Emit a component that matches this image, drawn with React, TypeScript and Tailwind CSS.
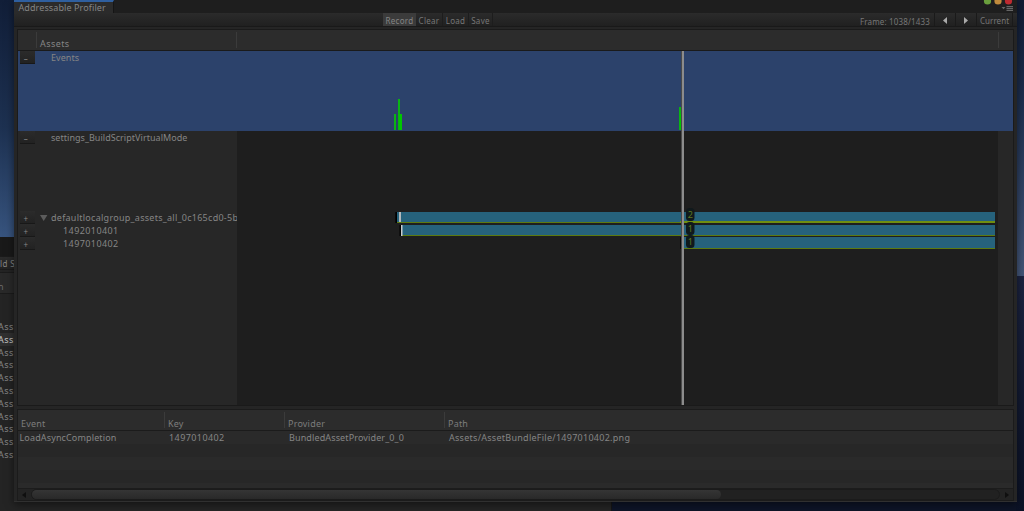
import clsx from 'clsx'

type Bar = { x: number; y: number; w: number; h: number; fill: string }

type Lane = {
  label: string
  expanded?: boolean
  selected?: boolean
  arrow?: boolean
  className: string
  height: string
  bars: Bar[]
  badge?: { text: string; y: number }
}

const BLUE = '#26627c'
const GREEN = '#0ab414'
const OLIVE = '#5c7a10'

const lanes: Lane[] = [
  {
    label: 'Events',
    expanded: true,
    selected: true,
    className: 'pl-[14px] tracking-[0.05px]',
    height: 'h-20',
    bars: [
      { x: 157, y: 63, w: 2, h: 16, fill: GREEN },
      { x: 161, y: 48, w: 2, h: 31, fill: GREEN },
      { x: 162, y: 63, w: 3, h: 16, fill: '#00c800' },
      { x: 442, y: 56, w: 2, h: 23, fill: GREEN },
      { x: 443, y: 63, w: 2, h: 16, fill: '#00c800' },
    ],
  },
  {
    label: 'settings_BuildScriptVirtualMode',
    expanded: true,
    className: 'pl-[14px] tracking-[0.04px]',
    height: 'h-20',
    bars: [],
  },
  {
    label: 'defaultlocalgroup_assets_all_0c165cd0-5b',
    arrow: true,
    className: 'pl-[3px] tracking-[0.27px]',
    height: 'h-[13px]',
    bars: [
      { x: 158.3, y: 1, w: 1.7, h: 11, fill: '#000' },
      { x: 160, y: 1, w: 598, h: 10, fill: BLUE },
      { x: 160, y: 11, w: 283, h: 1, fill: OLIVE },
      { x: 443, y: 10, w: 315, h: 2, fill: '#6f8f10' },
      { x: 162, y: 1, w: 2, h: 10, fill: '#b4babd' },
    ],
    badge: { text: '2', y: -3 },
  },
  {
    label: '1492010401',
    className: 'pl-[26px]',
    height: 'h-[13px]',
    bars: [
      { x: 162.5, y: 1, w: 1.5, h: 11, fill: '#000' },
      { x: 164, y: 1, w: 594, h: 10, fill: BLUE },
      { x: 164, y: 11, w: 594, h: 1, fill: OLIVE },
      { x: 164, y: 1, w: 1.5, h: 11, fill: '#c8cccd' },
    ],
    badge: { text: '1', y: -2 },
  },
  {
    label: '1497010402',
    className: 'pl-[26px]',
    height: 'h-[13px]',
    bars: [
      { x: 443.3, y: 0, w: 1.7, h: 12, fill: '#000' },
      { x: 446, y: 0, w: 312, h: 11, fill: BLUE },
      { x: 446, y: 11, w: 312, h: 1, fill: OLIVE },
    ],
    badge: { text: '1', y: -2 },
  },
]

const backgroundRows = ['Ass', 'Ass', 'Ass', 'Ass', 'Ass', 'Ass', 'Ass', 'Ass', 'Ass', 'Ass', 'Ass']

export default function App() {
  return (
    <div className="relative h-[511px] w-[1024px] overflow-hidden bg-[#0d1427] font-['Noto_Sans',sans-serif] text-[9px] leading-[13px] tracking-[0.42px] text-[#858585]">
      <Desktop />
      <BackgroundWindow />
      <ProfilerWindow />
    </div>
  )
}

function Desktop() {
  return (
    <div className="absolute inset-0 flex justify-between">
      <div className="w-4 bg-linear-to-b from-[#111e38] via-[#1d3151] via-25% to-[#3c5a86] to-50%" />
      <div className="flex w-2 flex-col">
        <div className="h-[276px] bg-linear-to-b from-[#111c34] via-[#1c2e4e] via-35% to-[#435678]" />
        <div className="flex-1 bg-linear-to-b from-[#1b2340] to-[#0b1226]" />
      </div>
    </div>
  )
}

function BackgroundWindow() {
  return (
    <div className="absolute top-[237px] left-0 flex h-[274px] w-[612px] flex-col border-r border-[#151515] bg-[#242424]">
      <div className="h-[19px] bg-[#191919]" />
      <div className="h-[14px] border-y border-[#1b1b1b] bg-linear-to-b from-[#2b2b2b] to-[#222] text-[8px]">ld S</div>
      <div className="mt-0.5 h-[22px] border-t border-b border-[#1b1b1b] bg-[#292929] pt-[7px]">
        <span className="-ml-0.5 text-[#6c6c6c]">h</span>
      </div>
      <div className="pt-[26px]">
        {backgroundRows.map((row, i) => (
          <div key={i} className={clsx('h-[12.8px]', i === 1 && 'bg-[#303030] text-[#c4c4c4]')}>
            <span className="-ml-0.5">{row}</span>
          </div>
        ))}
      </div>
    </div>
  )
}

function ProfilerWindow() {
  return (
    <div className="absolute top-0 left-[14px] flex h-[502px] w-[1003px] flex-col border-b border-[#303030] bg-[#252525] px-[3px] shadow-[0_2px_8px_rgba(0,0,0,0.5)]">
      <TabBar />
      <Toolbar />
      <Timeline />
      <EventTable />
    </div>
  )
}

function TabBar() {
  return (
    <div className="-mx-[3px] flex h-[13px] shrink-0 justify-between bg-[#1e1e1e]">
      <div className="w-[100px] border-t-2 border-r border-t-[#2f5f9f] border-r-[#151515] bg-[#2b2b2b] pl-[4.5px]">
        <div className="-mt-px leading-[13px] tracking-[0.1px] whitespace-nowrap">Addressable Profiler</div>
      </div>
      <svg width="42" height="13" className="shrink-0">
        <circle cx="12.5" cy="1" r="3.6" fill="#6a9f3d" />
        <circle cx="23" cy="1" r="3.6" fill="#c08a3c" />
        <circle cx="33.5" cy="1" r="3.6" fill="#bd2a30" />
        <path d="M26.5 7h4l-2 2.2zM31.5 6h6.5v1.2h-6.5zM31.5 8h6.5v1.2h-6.5zM31.5 10h6.5v1h-6.5z" fill="#666" />
      </svg>
    </div>
  )
}

function Toolbar() {
  return (
    <div className="-mx-[3px] flex h-[14px] shrink-0 border-b border-[#191919] bg-linear-to-b from-[#2b2b2b] to-[#202020] text-[8px] leading-[15px] tracking-[0.3px] text-[#777]">
      <div className="ml-[369px] flex text-center">
        <div className="w-[33px] bg-[#3b3b3b] text-[#858585]">Record</div>
        <div className="w-[27px] border-r border-[#1d1d1d]">Clear</div>
        <div className="w-[26px] border-r border-[#1d1d1d]">Load</div>
        <div className="w-6 border-r border-[#1d1d1d]">Save</div>
      </div>
      <div className="mr-1 ml-auto flex text-center">
        <div className="w-[75px] border-r border-[#1a1a1a] pr-[5px] text-right leading-[17px] tracking-[0.15px] whitespace-nowrap">
          Frame: 1038/1433
        </div>
        <div className="w-[21px] border-r border-[#1a1a1a] pt-1">
          <svg width="6" height="7" className="mx-auto"><path d="M5 0v7L1 3.5z" fill="#aaa" /></svg>
        </div>
        <div className="w-[21px] border-r border-[#1a1a1a] pt-1">
          <svg width="6" height="7" className="mx-auto"><path d="M1 0v7l4-3.5z" fill="#aaa" /></svg>
        </div>
        <div className="w-9 border-r border-[#1a1a1a] tracking-[0.05px]">Current</div>
      </div>
    </div>
  )
}

function Timeline() {
  return (
    <div className="relative mt-0.5 flex h-[377px] shrink-0 flex-col border border-[#1a1a1a]">
      <div className="flex h-[21px] shrink-0 items-end border-b border-[#1a1a1a] bg-[#2c2c2c] pb-0.5">
        <div className="h-4 w-[19px] border-r border-[#3b3b3b]" />
        <div className="h-4 w-[200px] border-r border-[#3b3b3b] pt-[5px] pl-[3px]">Assets</div>
        <div className="h-4 w-[762px] border-r border-[#3b3b3b]" />
      </div>
      <div className="flex flex-1 flex-col bg-[#272727]">
        {lanes.map(lane => (
          <LaneRow key={lane.label} lane={lane} />
        ))}
        <div className="flex flex-1">
          <div className="w-[219px]" />
          <div className="w-[761px] bg-[#1e1e1e]" />
        </div>
      </div>
      {/* current frame marker */}
      <div className="absolute top-[21px] bottom-0 left-[663px] w-[3px] border-l border-[#4a4a4a] bg-[#8c8c8c]" />
    </div>
  )
}

function LaneRow({ lane }: { lane: Lane }) {
  return (
    <div className={clsx('flex shrink-0', lane.height, lane.selected && 'bg-[#2c426b]')}>
      <div className="w-[19px] pl-0.5">
        <div className="h-[13px] w-[15px] border-b border-[#181818] bg-linear-to-b from-[#2b2b2b] to-[#222] pt-0.5 pr-[3px] text-center text-[8px] leading-[12px]">
          {lane.expanded ? '–' : '+'}
        </div>
      </div>
      <div className={clsx('flex w-[200px] overflow-hidden whitespace-nowrap', lane.className)}>
        {lane.arrow && (
          <svg width="11" height="13" className="shrink-0"><path d="M0 4h7.4L3.7 10z" fill="#5c5c5c" /></svg>
        )}
        {lane.label}
      </div>
      <svg className={clsx('h-full w-[761px] overflow-visible', !lane.selected && 'bg-[#1e1e1e]')}>
        {lane.bars.map((b, i) => (
          <rect key={i} x={b.x} y={b.y} width={b.w} height={b.h} fill={b.fill} />
        ))}
        {lane.badge && (
          <g>
            <rect x="449" y={lane.badge.y} width="8.5" height="13" rx="3.5" fill="#10191c" />
            <text x="453.3" y={lane.badge.y + 9.5} textAnchor="middle" fontSize="9" letterSpacing="0" fill="#5d7a20">
              {lane.badge.text}
            </text>
          </g>
        )}
      </svg>
    </div>
  )
}

function EventTable() {
  return (
    <div className="mt-[3px] flex h-[92px] shrink-0 flex-col border border-[#1b1b1b] bg-[#272727]">
      <div className="flex h-[21px] items-end border-b border-[#1b1b1b] bg-[#2c2c2c] pb-0.5 tracking-[0.2px] text-[#7c7c7c]">
        <div className="h-4 w-[147px] border-r border-[#3b3b3b] pt-[5px] pl-[3px]">Event</div>
        <div className="h-4 w-[120px] border-r border-[#3b3b3b] pt-[5px] pl-[3px]">Key</div>
        <div className="h-4 w-[160px] border-r border-[#3b3b3b] pt-[5px] pl-[3px]">Provider</div>
        <div className="h-4 pt-[5px] pl-[3px]">Path</div>
      </div>
      <div className="flex h-[13px] bg-[#2a2a2a]">
        <div className="w-[151px] pl-[1.5px] tracking-[0.14px]">LoadAsyncCompletion</div>
        <div className="w-[120px]">1497010402</div>
        <div className="w-40 tracking-[0.13px]">BundledAssetProvider_0_0</div>
        <div className="tracking-[0.27px]">Assets/AssetBundleFile/1497010402.png</div>
      </div>
      <div className="h-[13px]" />
      <div className="h-[13px] bg-[#2a2a2a]" />
      <div className="h-[13px]" />
      <div className="h-[5px] bg-[#2a2a2a]" />
      <div className="flex h-3 shrink-0 items-center border-t border-[#1c1c1c] bg-[#232323]">
        <svg width="13" height="10"><path d="M8 2v6L4 5z" fill="#0f0f0f" /></svg>
        <div className="flex h-[11px] w-[969px] rounded-full border border-[#1b1b1b] bg-[#212121]">
          <div className="h-full w-[689px] rounded-full bg-linear-to-b from-[#353535] to-[#292929]" />
        </div>
        <svg width="13" height="10"><path d="M5 2v6l4-3z" fill="#0f0f0f" /></svg>
      </div>
    </div>
  )
}
